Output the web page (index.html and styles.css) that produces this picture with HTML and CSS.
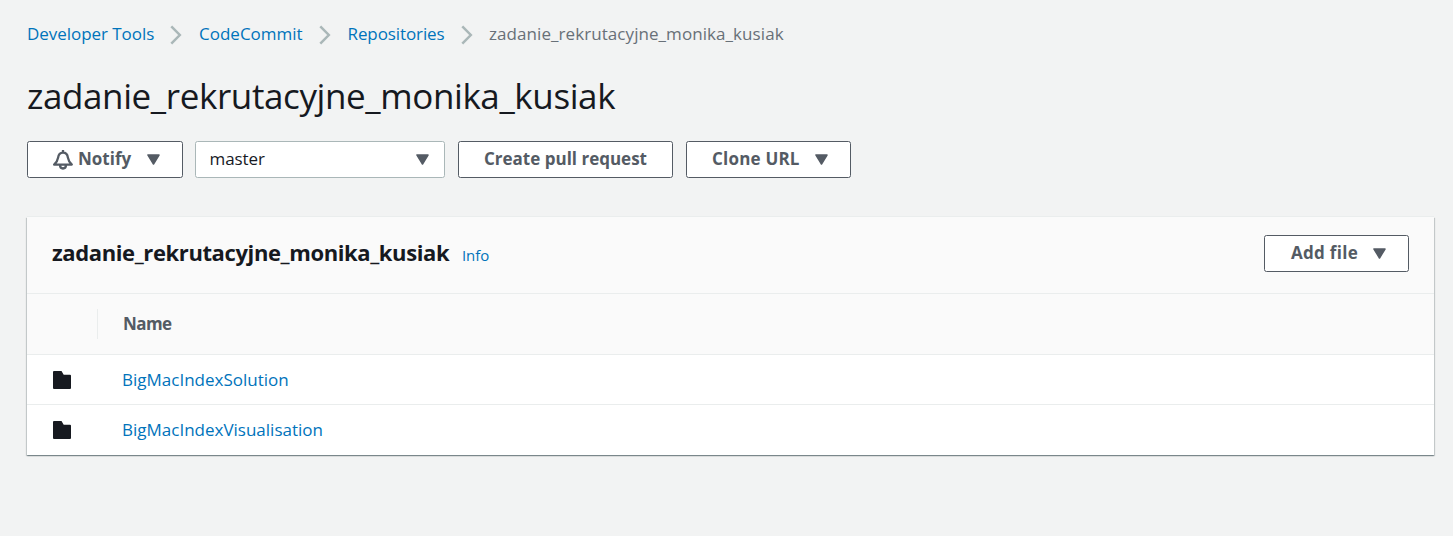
FILE: index.html
```html
<!DOCTYPE html>
<html lang="en">
<head>
<meta charset="utf-8">
<title>zadanie_rekrutacyjne_monika_kusiak</title>
<link rel="stylesheet" href="styles.css">
</head>
<body>
<nav class="crumbs">
  <a class="crumb c1" href="#"><span>Developer Tools</span></a>
  <svg class="chev" viewBox="0 0 12 20"><path d="M1.300 1.300 9.800 10 1.300 18.700"/></svg>
  <a class="crumb c2" href="#"><span>CodeCommit</span></a>
  <svg class="chev" viewBox="0 0 12 20"><path d="M1.300 1.300 9.800 10 1.300 18.700"/></svg>
  <a class="crumb c3" href="#"><span>Repositories</span></a>
  <svg class="chev" viewBox="0 0 12 20"><path d="M1.300 1.300 9.800 10 1.300 18.700"/></svg>
  <span class="crumb current">zadanie_rekrutacyjne_monika_kusiak</span>
</nav>
<h1 class="title">zadanie_rekrutacyjne_monika_kusiak</h1>
<div class="actions">
  <button class="btn notify">
    <svg class="bell" viewBox="0 0 20 20"><path d="M10 0v3M10 2.600C7.200 2.600 5.500 4.500 5.100 7.600 4.700 10.500 3.400 12.300 1.200 14.600h17.600c-2.200-2.300-3.500-4.100-3.900-7-.4-3.100-2.100-5-4.900-5zM7 14.800c0 2.300 1.200 3.700 3 3.700s3-1.400 3-3.700"/></svg>
    <span class="label">Notify</span>
    <svg class="caret" viewBox="0 0 13 11"><path d="M1 1h11L6.500 10z"/></svg>
  </button>
  <button class="btn select">
    <span class="value">master</span>
    <svg class="caret" viewBox="0 0 13 11"><path d="M1 1h11L6.500 10z"/></svg>
  </button>
  <button class="btn pull"><span class="label">Create pull request</span></button>
  <button class="btn clone">
    <span class="label">Clone URL</span>
    <svg class="caret" viewBox="0 0 13 11"><path d="M1 1h11L6.500 10z"/></svg>
  </button>
</div>
<section class="panel">
  <header class="panel-head">
    <h2 class="panel-title">zadanie_rekrutacyjne_monika_kusiak</h2>
    <a class="info" href="#">Info</a>
    <button class="btn add">
      <span class="label">Add file</span>
      <svg class="caret" viewBox="0 0 13 11"><path d="M1 1h11L6.500 10z"/></svg>
    </button>
  </header>
  <div class="columns"><span class="column-name">Name</span></div>
  <div class="row">
    <svg class="folder" viewBox="0 0 18 18"><path d="M1 0h7.500l2.200 3.800H17a1 1 0 0 1 1 1V17a1 1 0 0 1-1 1H1a1 1 0 0 1-1-1V1a1 1 0 0 1 1-1z"/></svg>
    <a class="file" href="#">BigMacIndexSolution</a>
  </div>
  <div class="row">
    <svg class="folder" viewBox="0 0 18 18"><path d="M1 0h7.500l2.200 3.800H17a1 1 0 0 1 1 1V17a1 1 0 0 1-1 1H1a1 1 0 0 1-1-1V1a1 1 0 0 1 1-1z"/></svg>
    <a class="file" href="#">BigMacIndexVisualisation</a>
  </div>
</section>
</body>
</html>
```
FILE: styles.css
```css
* { box-sizing: border-box; }
body {
  margin: 0;
  height: 536px;
  padding: 21px 19px 0 27px;
  background: #f2f3f3;
  color: #16191f;
  font-family: "Open Sans", sans-serif;
  font-size: 17px;
}
a { color: #0073bb; text-decoration: none; }
h1, h2 { margin: 0; }
.crumbs { display: flex; align-items: center; height: 26px; white-space: nowrap; }
.crumb { flex: none; padding-bottom: 2px; }
.c1 { width: 143px; letter-spacing: -.05px; }
.c2 { width: 119.5px; }
.c3 { width: 113.5px; letter-spacing: -.1px; }
.current { color: #687078; letter-spacing: .07px; }
.chev { flex: none; width: 12px; height: 20px; margin: 2px 17px 0 0; fill: none; stroke: #aab7b8; stroke-width: 2.5; }
.c3 + .chev { margin-right: 16px; }
.title { height: 50px; margin-top: 24px; font-size: 35px; font-weight: 400; line-height: 50px; letter-spacing: -.4px; white-space: nowrap; }
.actions { display: flex; height: 37px; margin-top: 20px; }
.btn {
  display: flex;
  align-items: center;
  height: 37px;
  padding: 0 0 1px 25px;
  border: 1px solid #545b64;
  border-radius: 2.5px;
  background: #fff;
  color: #545b64;
  font: 700 17px "Open Sans", sans-serif;
  white-space: nowrap;
}
.label, .value { padding-bottom: 1px; }
.caret { flex: none; width: 13px; height: 11px; margin: 1px 22.5px 0 auto; fill: #545b64; stroke: #545b64; stroke-width: 1.5; stroke-linejoin: round; }
.bell { flex: none; width: 20px; height: 20px; margin: 2px 5px 0 0; fill: none; stroke: #545b64; stroke-width: 2.3; stroke-linejoin: round; }
.notify { width: 156px; }
.select { width: 250px; margin-left: 12px; padding-left: 13.5px; border-color: #aab7b8; color: #16191f; font-weight: 400; letter-spacing: -.1px; }
.select .caret { margin-right: 15.5px; }
.pull { width: 215px; margin-left: 13px; }
.clone { width: 165px; margin-left: 13px; letter-spacing: .2px; }
.panel {
  height: 238px;
  margin-top: 39px;
  background: #fff;
  box-shadow: 0 -1px 0 #eaeded, 0 1px 1px rgba(0,28,36,.3), 1px 1px 1px rgba(0,28,36,.15), -1px 1px 1px rgba(0,28,36,.15);
}
.panel-head { display: flex; align-items: center; height: 77px; padding: 0 25px 4px; border-bottom: 1px solid #eaeded; background: #fafafa; }
.panel-title { width: 398px; padding-bottom: 2px; font-size: 22px; font-weight: 700; line-height: 30px; letter-spacing: -.39px; white-space: nowrap; }
.info { margin: 3px 0 0 12px; font-size: 15px; letter-spacing: -.1px; }
.add { width: 145px; margin-left: auto; padding-left: 26px; letter-spacing: .3px; }
.columns { display: flex; align-items: center; height: 61px; padding-left: 70px; border-bottom: 1px solid #eaeded; background: #fafafa; }
.column-name { height: 30px; padding-left: 25px; border-left: 1px solid #eaeded; color: #545b64; font-weight: 700; line-height: 30px; letter-spacing: -.6px; }
.row { display: flex; align-items: center; height: 49px; padding-left: 26px; }
.row + .row { height: 50px; border-top: 1px solid #eaeded; }
.folder { flex: none; width: 18px; height: 18px; margin: 1px 51px 0 0; fill: #16191f; }
```
